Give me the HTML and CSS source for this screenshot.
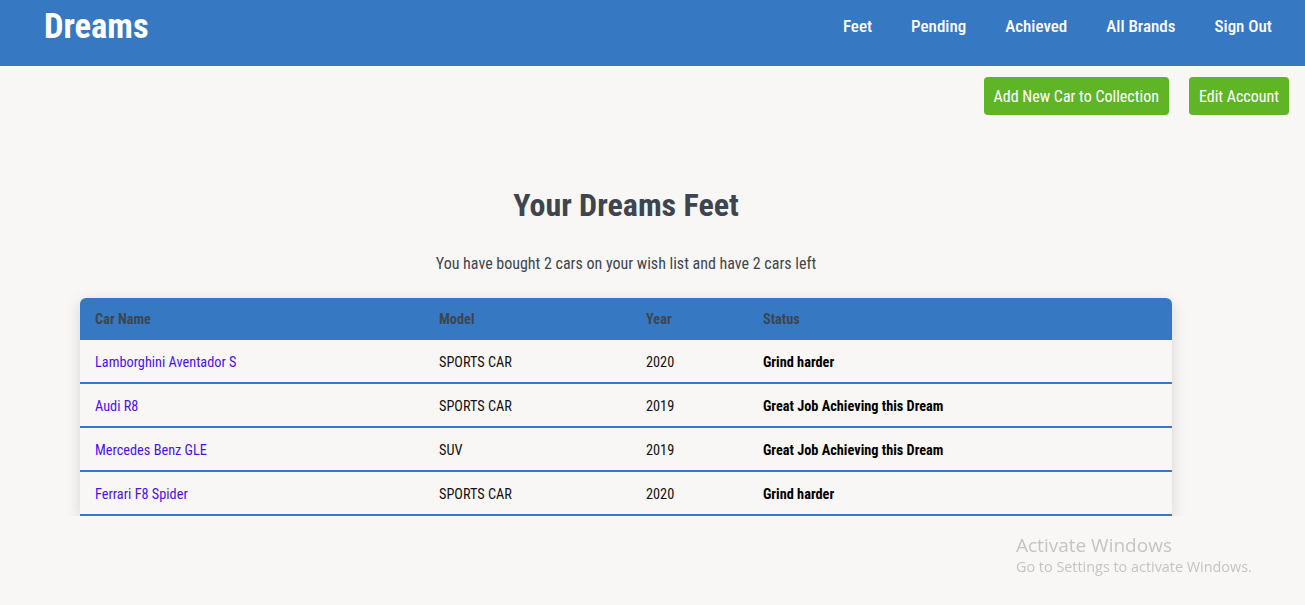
FILE: index.html
```html
<!DOCTYPE html>
<html lang="en">
<head>
<meta charset="utf-8">
<title>Dreams</title>
<link rel="stylesheet" href="styles.css">
</head>
<body>
<header class="navbar">
  <a class="brand" href="#">Dreams</a>
  <nav class="nav-links">
    <a href="#">Feet</a>
    <a href="#">Pending</a>
    <a href="#">Achieved</a>
    <a href="#">All Brands</a>
    <a href="#">Sign Out</a>
  </nav>
</header>
<div class="actions">
  <a class="btn" href="#">Add New Car to Collection</a>
  <a class="btn" href="#">Edit Account</a>
</div>
<main class="content">
  <h1 class="title">Your Dreams Feet</h1>
  <p class="summary">You have bought 2 cars on your wish list and have 2 cars left</p>
  <table class="cars">
    <thead>
      <tr><th class="c-name">Car Name</th><th class="c-model">Model</th><th class="c-year">Year</th><th>Status</th></tr>
    </thead>
    <tbody>
      <tr><td><a href="#">Lamborghini Aventador S</a></td><td>SPORTS CAR</td><td>2020</td><td class="status">Grind harder</td></tr>
      <tr><td><a href="#">Audi R8</a></td><td>SPORTS CAR</td><td>2019</td><td class="status">Great Job Achieving this Dream</td></tr>
      <tr><td><a href="#">Mercedes Benz GLE</a></td><td>SUV</td><td>2019</td><td class="status">Great Job Achieving this Dream</td></tr>
      <tr><td><a href="#">Ferrari F8 Spider</a></td><td>SPORTS CAR</td><td>2020</td><td class="status">Grind harder</td></tr>
    </tbody>
  </table>
</main>
<div class="watermark">
  <div class="wm-title">Activate Windows</div>
  <div class="wm-sub">Go to Settings to activate Windows.</div>
</div>
</body>
</html>
```
FILE: styles.css
```css
* { box-sizing: border-box; }
html, body { margin: 0; padding: 0; }
body {
  background: #f8f7f5;
  font-family: Roboto, "Liberation Sans", sans-serif;
  font-stretch: condensed;
  color: #333;
}
a { text-decoration: none; }
.navbar {
  height: 66px;
  background: #3778c2;
  display: flex;
  align-items: center;
  justify-content: space-between;
  padding: 0 33px 0 44px;
}
.brand {
  color: #fff;
  font-size: 34.5px;
  font-weight: 700;
  margin-top: -14px;
}
.nav-links {
  display: flex;
  gap: 39px;
  margin-top: -14px;
}
.nav-links a {
  color: #fff;
  font-size: 17px;
  font-weight: 500;
}
.actions {
  display: flex;
  justify-content: flex-end;
  gap: 20px;
  padding: 11px 16px 0 0;
}
.btn {
  display: inline-flex;
  align-items: center;
  height: 38px;
  padding: 0 10px;
  background: #5fb526;
  color: #fff;
  font-size: 16px;
  font-weight: 400;
  border-radius: 4px;
}
.content {
  display: flex;
  flex-direction: column;
  align-items: center;
  padding-right: 53px;
}
.title {
  margin: 70px 0 0;
  font-size: 32px;
  font-weight: 700;
  color: #3e454f;
  line-height: 40px;
}
.summary {
  margin: 29px 0 0;
  font-size: 16px;
  color: #3e454f;
  line-height: 20px;
}
.cars {
  margin-top: 24px;
  width: 1092px;
  border-collapse: separate;
  border-spacing: 0;
  box-shadow: 0 4px 16px rgba(0,0,0,0.14);
  border-radius: 6px 6px 0 0;
  overflow: hidden;
  font-size: 14.3px;
}
.cars thead tr { background: #3778c2; }
.cars th {
  text-align: left;
  height: 42px;
  padding: 0 15px;
  color: #3d4550;
  font-weight: 700;
}
.c-name { width: 344px; }
.c-model { width: 207px; }
.c-year { width: 117px; }
.cars td {
  height: 44px;
  padding: 1px 15px 0;
  border-bottom: 2px solid #3778c2;
  color: #111;
  background: #f8f7f5;
}
.cars td a { color: #4c12e8; }
.cars td.status { font-weight: 700; color: #000; }
.watermark {
  position: fixed;
  left: 1016px;
  top: 533px;
  color: #c4c4c4;
  font-family: "Open Sans", sans-serif;
  font-stretch: normal;
}
.wm-title { font-size: 19px; line-height: 24px; }
.wm-sub { font-size: 14.4px; line-height: 20px; }
```
